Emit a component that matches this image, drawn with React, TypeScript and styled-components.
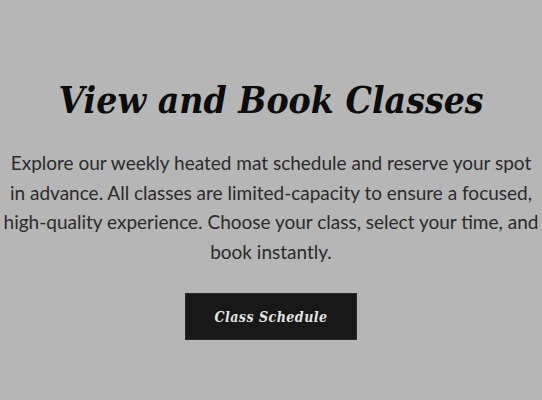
import styled, { createGlobalStyle } from 'styled-components';

const GlobalStyle = createGlobalStyle`
  html, body {
    margin: 0;
    padding: 0;
    background-color: #b6b6b6;
  }
`;

const Section = styled.section`
  display: flex;
  flex-direction: column;
  align-items: center;
  padding: 76px 0 0;
  height: 400px;
  box-sizing: border-box;
  text-align: center;
`;

const Title = styled.h1`
  margin: 0;
  font-family: 'DejaVu Serif Condensed', 'DejaVu Serif', serif;
  font-style: italic;
  font-weight: 700;
  font-size: 37px;
  line-height: 48px;
  color: #0c0c0c;
`;

const Intro = styled.p`
  margin: 24px 0 0;
  font-family: Lato, 'Liberation Sans', sans-serif;
  font-size: 19px;
  line-height: 29.5px;
  color: #2b2b2b;
`;

const ScheduleButton = styled.button`
  margin-top: 27px;
  width: 172px;
  height: 47px;
  background-color: #181818;
  border: 1px solid #2a2a2a;
  color: #e4e4e4;
  font-family: 'DejaVu Serif Condensed', 'DejaVu Serif', serif;
  font-style: italic;
  font-weight: 700;
  font-size: 14px;
  letter-spacing: 0.5px;
  cursor: pointer;
`;

const App = () => (
  <>
    <GlobalStyle />
    <Section>
      <Title>View and Book Classes</Title>
      <Intro>
        Explore our weekly heated mat schedule and reserve your spot
        <br />
        in advance. All classes are limited-capacity to ensure a focused,
        <br />
        high-quality experience. Choose your class, select your time, and
        <br />
        book instantly.
      </Intro>
      <ScheduleButton>Class Schedule</ScheduleButton>
    </Section>
  </>
);

export default App;
